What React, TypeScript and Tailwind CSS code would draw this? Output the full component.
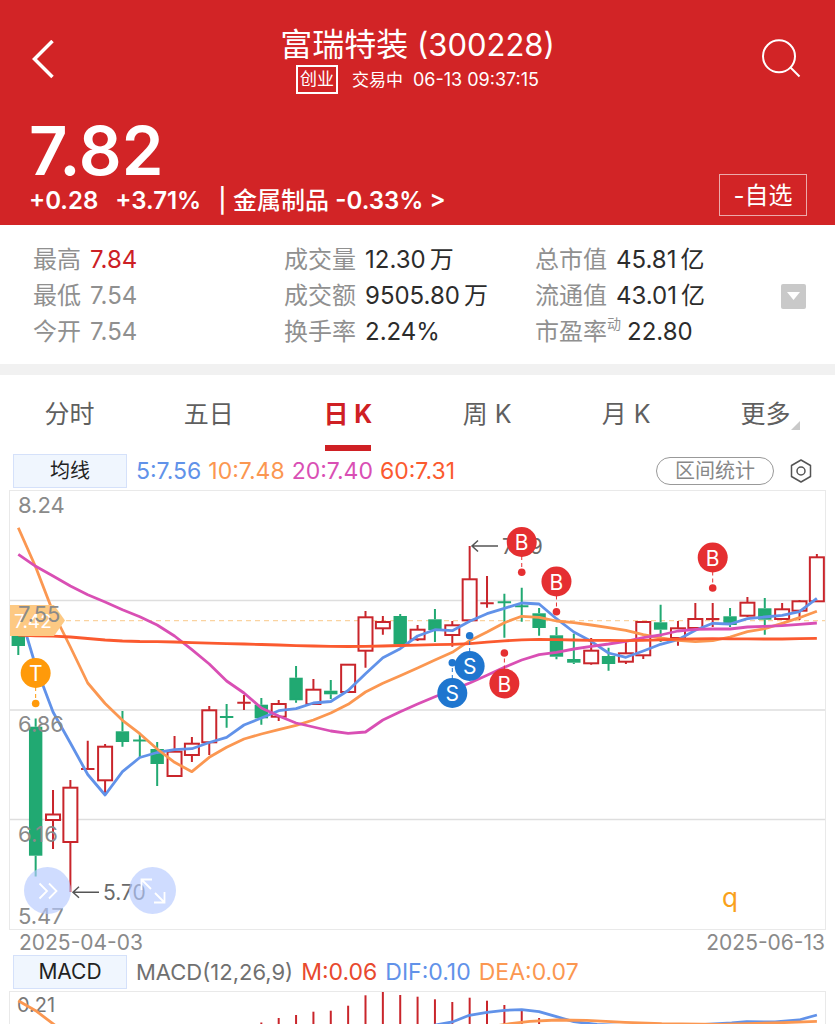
import React from "react";

type Candle = [high: number, low: number, top: number, bottom: number, up: boolean];

const FIRST_X = 18.3;
const STEP = 17.36;
const cx = (i: number) => FIRST_X + STEP * i;

const candles: Candle[] = [
  [612, 655, 620, 646, false],
  [718.5, 876.5, 726.7, 855.7, false],
  [790, 849, 814.5, 820, true],
  [780, 892, 787.7, 842, true],
  [740.7, 770, 769, 769, true],
  [744, 793, 746.7, 780.3, true],
  [711, 746.7, 731.3, 742, false],
  [733, 757, 740.5, 740.5, false],
  [742, 786, 749, 764, false],
  [736, 777, 751.7, 776, true],
  [737, 762, 743.7, 755, true],
  [706, 755, 710.3, 742.3, true],
  [704, 727.7, 717, 717, false],
  [695, 710, 702.7, 702.7, true],
  [698, 724.7, 704.7, 718.3, false],
  [700, 721, 704, 716.7, true],
  [666, 702.7, 677.7, 700.3, false],
  [679, 705, 689.7, 704, true],
  [680, 699, 690.7, 694.3, false],
  [664.7, 692, 664.7, 692, true],
  [611, 667.7, 617.3, 650.7, true],
  [616, 634.7, 622, 628.3, true],
  [614, 644.5, 616, 644.5, false],
  [625, 641, 629.7, 639.3, true],
  [609, 642, 619.3, 630, false],
  [621, 646.7, 625.3, 635, true],
  [546, 620.3, 579.3, 620.3, true],
  [576, 607.7, 603.3, 603.3, true],
  [593.7, 637.7, 602.3, 602.3, false],
  [587.7, 621.7, 606.3, 606.3, false],
  [608, 635.7, 613.3, 628, false],
  [627, 659.3, 635.3, 656.7, false],
  [633.7, 664, 659, 662.7, false],
  [638, 664.7, 650.7, 663.3, true],
  [647.7, 670.7, 656, 664, false],
  [641.7, 664, 653.3, 661.7, true],
  [622, 659, 622, 655.3, true],
  [604.7, 642, 622.3, 629.7, false],
  [621, 645.7, 628.3, 638, true],
  [603, 628, 619, 628, true],
  [603, 627, 619, 619, true],
  [608, 627, 616.3, 625, false],
  [597, 617, 602.7, 615.7, true],
  [598, 634.7, 608.3, 619.7, false],
  [603, 620, 609.3, 619, true],
  [600, 620, 601.3, 610.7, true],
  [554, 601.3, 557.3, 601.3, true],
];

const ma5 = [608, 666, 712, 743, 774.5, 795, 771.7, 757.5, 752.5, 749.7, 748.7, 742.5, 737.3, 725, 718, 710.7, 708.7, 703, 701.5, 690.5, 673.7, 657.7, 648.7, 636, 629.7, 630.7, 621.3, 613.7, 608.3, 603, 604, 618.7, 632, 641.3, 653, 657.3, 651, 644.3, 639.7, 630.3, 623.3, 624, 618.7, 617, 615.3, 611.7, 598.3];
const ma10 = [527.7, 567, 612, 647, 683, 703.5, 720.3, 733.7, 749, 762.3, 771.7, 757.3, 747.3, 739, 734, 729.7, 725.3, 720, 713, 704.3, 692, 683.3, 675.7, 668, 660, 652.3, 640.7, 632, 622.7, 616.3, 617.3, 621, 622.7, 625, 627.7, 630.3, 634.7, 638, 640.3, 641.7, 640.7, 637, 631.7, 628.7, 623.3, 617.7, 611.3];
const ma20 = [554.3, 566.3, 576, 586, 594.7, 602, 609.7, 616.7, 625, 636, 649.7, 664, 681, 693, 708, 716, 723, 727, 731, 733.3, 732, 720, 711.7, 704, 696.7, 690, 683, 675.3, 667.3, 660, 654.7, 652.3, 649, 646.3, 644, 641.3, 637.7, 635, 631, 629.3, 629, 629, 627, 626.3, 625.7, 624.3, 623];
const ma60 = [635, 635.8, 636.2, 637, 638.5, 640, 641, 641.5, 641.6, 642, 642.6, 643.2, 643.6, 644, 644.5, 645, 645.6, 646, 646.3, 646.5, 646.4, 646, 645.5, 645.2, 644.7, 644.3, 643.7, 642.2, 640.8, 639.8, 639.3, 639.6, 640, 640.3, 640.4, 640.6, 640.3, 639.8, 639.2, 638.9, 638.7, 638.8, 638.9, 639, 639, 638.7, 638.3];

const toPoints = (ys: number[]) => ys.map((y, i) => `${cx(i)},${y}`).join(" ");

const macdBars = [1022.5, 1018, 1015, 1011.7, 1010.7, 1005.7, 995.3, 991.7, 995, 996.7, 999.3, 1002, 997.7, 1000.7, 1005, 1010.7, 1018];

function CandleShape({ index, data }: { index: number; data: Candle }) {
  const [high, low, top, bottom, up] = data;
  const x = cx(index);
  const color = up ? "#c9252b" : "#21a972";
  if (top === bottom) {
    return (
      <g stroke={color} strokeWidth={2}>
        <path d={`M${x} ${high}V${low}M${x - 6.7} ${top}H${x + 6.7}`} />
      </g>
    );
  }
  return (
    <g stroke={color} strokeWidth={2}>
      <path d={`M${x} ${high}V${top}M${x} ${bottom}V${low}`} />
      <rect
        x={up ? x - 7 : x - 5.7}
        y={up ? top : top + 1}
        width={up ? 14 : 11.4}
        height={up ? bottom - top : Math.max(bottom - top - 2, 1)}
        fill={up ? "#fff" : color}
      />
    </g>
  );
}

interface MarkerProps {
  index: number;
  y: number;
  dot: number;
  label: string;
  color: string;
}

const markers: MarkerProps[] = [
  { index: 1, y: 673, dot: 703.5, label: "T", color: "#ff9a0a" },
  { index: 29, y: 542, dot: 572.3, label: "B", color: "#e52f31" },
  { index: 31, y: 581.5, dot: 611.7, label: "B", color: "#e52f31" },
  { index: 40, y: 557.5, dot: 588, label: "B", color: "#e52f31" },
  { index: 28, y: 683.5, dot: 653, label: "B", color: "#e52f31" },
  { index: 25, y: 693, dot: 662.7, label: "S", color: "#1f76cf" },
  { index: 26, y: 666, dot: 635.7, label: "S", color: "#1f76cf" },
];

function Marker({ index, y, dot, label, color }: MarkerProps) {
  const x = cx(index);
  return (
    <g>
      <path d={`M${x} ${y}V${dot}`} stroke={color} strokeWidth={1} strokeDasharray="4 3" />
      <circle cx={x} cy={dot} r={3.8} fill={color} />
      <circle cx={x} cy={y} r={15} fill={color} />
      <text x={x} y={y + 8} textAnchor="middle" fontSize={21} fill="#fff">
        {label}
      </text>
    </g>
  );
}

function PriceChart() {
  return (
    <svg viewBox="10 491 815 438" className="block h-auto w-full" role="img" aria-label="日K">
      <path d="M10 600.5H825M10 710H825M10 819.5H825" stroke="#dedede" strokeWidth={1.4} />
      <path d="M66 620.7H825" stroke="#fad3a0" strokeWidth={1.2} strokeDasharray="5 4" />
      {candles.map((c, i) => (
        <CandleShape key={i} index={i} data={c} />
      ))}
      <g fill="none" strokeWidth={2.8} strokeLinejoin="round">
        <polyline points={toPoints(ma5)} stroke="#6192e9" />
        <polyline points={toPoints(ma10)} stroke="#fb9751" />
        <polyline points={toPoints(ma20)} stroke="#d94fb4" />
        <polyline points={toPoints(ma60)} stroke="#fb5a2f" />
      </g>
      <path d="M10 605H54L65 620.5L54 636H10Z" fill="#fdc983" />
      <text x={14} y={628} fontSize={19} fill="#fff">7.42</text>
      <g fontSize={22} fill="#8a8a8a">
        <text x={18} y={513}>8.24</text>
        <text x={18} y={622}>7.55</text>
        <text x={18} y={732}>6.86</text>
        <text x={18} y={842}>6.16</text>
        <text x={18} y={924}>5.47</text>
      </g>
      <g fill="none" stroke="#555" strokeWidth={1.5}>
        <path d="M498 546H472M478 540.5L472 546L478 551.5" />
        <path d="M99 892.3H73M79 886.8L73 892.3L79 897.8" />
      </g>
      <g fontSize={21} fill="#6a6a6a">
        <text x={502} y={554}>7.89</text>
        <text x={103} y={900}>5.70</text>
      </g>
      {markers.map((m, i) => (
        <Marker key={i} {...m} />
      ))}
      <text x={722} y={907} fontSize={26} fill="#f9a11b">q</text>
    </svg>
  );
}

function MacdChart() {
  return (
    <svg viewBox="10 992 815 32" className="block h-auto w-full" role="img" aria-label="MACD">
      <text x={17} y={1012} fontSize={20} fill="#777">0.21</text>
      <g stroke="#c9252b" strokeWidth={2}>
        {macdBars.map((y, i) => (
          <path key={i} d={`M${cx(i + 14)} ${y}V1026`} />
        ))}
      </g>
      <g fill="none" strokeWidth={2.8} strokeLinejoin="round">
        <polyline points="430,1026 452.3,1022 469.3,1015.3 487,1012.3 504.4,1010.3 521.7,1009.7 539,1011.7 556.5,1016.7 573.8,1021.7 597,1024.5 660,1027 705,1024.3 731.7,1023 746.7,1021.7 775,1022 799,1020 816.9,1015" stroke="#6192e9" />
        <polyline points="18.3,1000.7 35.7,1010.7 56,1026" stroke="#fb9751" />
        <polyline points="495,1026 510,1023.7 530,1021.3 556.7,1020 586.7,1020.3 625,1022.3 661.7,1023.7 720,1024.5 781.7,1022.7 816.9,1021.3" stroke="#fb9751" />
      </g>
    </svg>
  );
}

const tabs = ["分时", "五日", "日 K", "周 K", "月 K", "更多"];

interface StatProps {
  label: string;
  value: string;
  unit?: string;
  sup?: string;
  tone?: string;
}

const stats: StatProps[] = [
  { label: "最高", value: "7.84", tone: "text-[#cc2025]" },
  { label: "成交量", value: "12.30", unit: "万" },
  { label: "总市值", value: "45.81", unit: "亿" },
  { label: "最低", value: "7.54", tone: "text-[#909090]" },
  { label: "成交额", value: "9505.80", unit: "万" },
  { label: "流通值", value: "43.01", unit: "亿" },
  { label: "今开", value: "7.54", tone: "text-[#909090]" },
  { label: "换手率", value: "2.24%" },
  { label: "市盈率", value: "22.80", sup: "动" },
];

function Stat({ label, value, unit, sup, tone = "text-[#2c2c2c]" }: StatProps) {
  return (
    <div className={sup ? "flex gap-[6px] whitespace-nowrap" : "flex gap-[9px] whitespace-nowrap"}>
      <dt className="flex text-[#909090]">
        {label}
        {sup && <sup className="top-0 -mt-2 text-[14px] leading-[36px]">{sup}</sup>}
      </dt>
      <dd className={tone}>
        {value}
        {unit && <span className="ml-1">{unit}</span>}
      </dd>
    </div>
  );
}

export default function App() {
  return (
    <div className="min-h-screen w-full overflow-hidden bg-white font-['Inter','Noto_Sans_CJK_SC',sans-serif]">
      <header className="bg-[#d22426] text-white">
        <div className="flex items-start justify-between pt-6 pr-8 pl-8">
          <button type="button" aria-label="返回" className="mt-4 flex w-10 justify-start">
            <svg width="22" height="40" viewBox="0 0 22 40" fill="none" stroke="currentColor" strokeWidth="3.5">
              <path d="M20.5 1L2.5 19L20.5 37" />
            </svg>
          </button>
          <div className="flex flex-col items-center">
            <h1 className="text-[31px] leading-[41px]">
              <span className="text-[32px]">富瑞特装</span> (300228)
            </h1>
            <div className="flex items-center gap-[14px] text-[17px] leading-[26px]">
              <span className="border-2 border-white px-[2px] leading-[25px]">创业</span>
              <span className="flex gap-[10px]">
                <span>交易中</span>
                <span className="text-[18px]">06-13 09:37:15</span>
              </span>
            </div>
          </div>
          <button type="button" aria-label="搜索" className="mt-4 flex w-10 justify-end">
            <svg width="40" height="40" viewBox="0 0 40 40" fill="none" stroke="currentColor" strokeWidth="2" className="overflow-visible">
              <circle cx="16" cy="16.3" r="16" />
              <path d="M27 27L36.500 36.500" />
            </svg>
          </button>
        </div>
        <div className="flex items-end justify-between pr-7 pb-[9px] pl-[29px]">
          <div>
            <div className="mt-[22px] text-[67px] leading-[70px] font-semibold">7.82</div>
            <div className="flex items-center gap-[17px] text-[24px] leading-[30px] font-semibold whitespace-nowrap">
              <span>+0.28</span>
              <span>+3.71%</span>
              <a href="#industry" className="font-medium">
                | 金属制品 <span className="font-semibold">-0.33% &gt;</span>
              </a>
            </div>
          </div>
          <button type="button" className="h-[42px] w-[88px] border border-[#ecaaaa] text-[24px] leading-[42px]">
            -自选
          </button>
        </div>
      </header>

      <section className="flex items-center pt-[17px] pr-[29px] pb-[14px] pl-[33px]">
        <dl className="grid flex-1 grid-cols-[251fr_251fr_246fr] text-[24px] leading-[36px]">
          {stats.map((s) => (
            <Stat key={s.label} {...s} />
          ))}
        </dl>
        <button type="button" aria-label="展开" className="flex h-[25px] w-[25px] items-center justify-center rounded-[2px] bg-[#c9c9c9]">
          <svg width="13" height="8" viewBox="0 0 13 8" fill="#fff">
            <path d="M0 0H13L6.500 8Z" />
          </svg>
        </button>
      </section>

      <div className="h-[11px] bg-[#f1f1f1]" />

      <nav className="grid grid-cols-6">
        {tabs.map((t) => {
          const active = t === "日 K";
          return (
            <button
              key={t}
              type="button"
              className={
                active
                  ? "flex flex-col items-center pt-[21px] text-[25px] leading-[36px] font-bold text-[#cf2024]"
                  : "flex flex-col items-center pt-[21px] text-[25px] leading-[36px] text-[#5f5f5f]"
              }
            >
              <span className="relative">
                {t}
                {t === "更多" && (
                  <svg className="absolute -right-[10px] bottom-[2px]" width="9" height="9" viewBox="0 0 9 9" fill="#c9c9c9">
                    <path d="M9 0V9H0Z" />
                  </svg>
                )}
              </span>
              <span className={active ? "mt-[13px] h-[6px] w-[46px] bg-[#cf2024]" : "mt-[13px] h-[6px] w-[46px]"} />
            </button>
          );
        })}
      </nav>

      <div className="flex h-10 items-center justify-between pr-[23px] pl-[13px]">
        <div className="flex items-center gap-[9px]">
          <button type="button" className="h-[34px] w-[114px] border border-[#d5e1fa] bg-[#f0f6fe] text-[20px] leading-[32px] text-[#222]">
            均线
          </button>
          <div className="flex gap-[7px] text-[23px] leading-[30px]">
            <span className="text-[#6192e9]">5:7.56</span>
            <span className="text-[#fb9751]">10:7.48</span>
            <span className="text-[#d94fb4]">20:7.40</span>
            <span className="text-[#fb5a2f]">60:7.31</span>
          </div>
        </div>
        <div className="flex items-center gap-4">
          <button type="button" className="h-7 w-[118px] rounded-full border border-[#999] text-[20px] leading-[25px] text-[#888]">
            区间统计
          </button>
          <button type="button" aria-label="设置">
            <svg width="22" height="24" viewBox="0 0 22 24" fill="none" stroke="#555" strokeWidth="1.5" strokeLinejoin="round">
              <path d="M11 1L20.500 6.500V17.500L11 23L1.500 17.500V6.500Z" />
              <circle cx="11" cy="12" r="4" />
            </svg>
          </button>
        </div>
      </div>

      <main className="pr-[10px] pl-[10px]">
        <div className="relative outline-1 outline-[#e9e9e9]">
          <PriceChart />
          <button type="button" aria-label="快进" className="absolute bottom-[15px] left-[14px] flex h-[47px] w-[47px] items-center justify-center rounded-full bg-[#b5caff]/65">
            <svg width="20" height="18" viewBox="0 0 20 18" fill="none" stroke="#fff" strokeWidth="1.8">
              <path d="M1.500 1.500L9 9L1.500 16.500M11 1.500L18.500 9L11 16.500" />
            </svg>
          </button>
          <button type="button" aria-label="全屏" className="absolute bottom-[15px] left-[119px] flex h-[47px] w-[47px] items-center justify-center rounded-full bg-[#b5caff]/65">
            <svg width="26" height="26" viewBox="0 0 26 26" fill="none" stroke="#fff" strokeWidth="1.8">
              <path d="M1.500 12V1.500H12M1.500 1.500L11 11M24.500 14V24.500H14M24.500 24.500L15 15" />
            </svg>
          </button>
        </div>
        <div className="flex h-[26px] justify-between border-t border-[#dedede] pl-[9px] text-[21px] leading-[26px] text-[#8a8a8a]">
          <time>2025-04-03</time>
          <time>2025-06-13</time>
        </div>
        <div className="flex h-[37px] items-start gap-[9px] pl-[3px]">
          <button type="button" className="h-[34px] w-[114px] border border-[#d5e1fa] bg-[#f0f6fe] text-[21px] leading-[32px] text-[#222]">
            MACD
          </button>
          <div className="flex gap-2 text-[23px] leading-[34px]">
            <span className="text-[22px] text-[#707070]">MACD(12,26,9)</span>
            <span className="text-[#e8492e]">M:0.06</span>
            <span className="text-[#6192e9]">DIF:0.10</span>
            <span className="text-[#fb9751]">DEA:0.07</span>
          </div>
        </div>
        <div className="outline-1 outline-[#e9e9e9]">
          <MacdChart />
        </div>
      </main>
    </div>
  );
}
